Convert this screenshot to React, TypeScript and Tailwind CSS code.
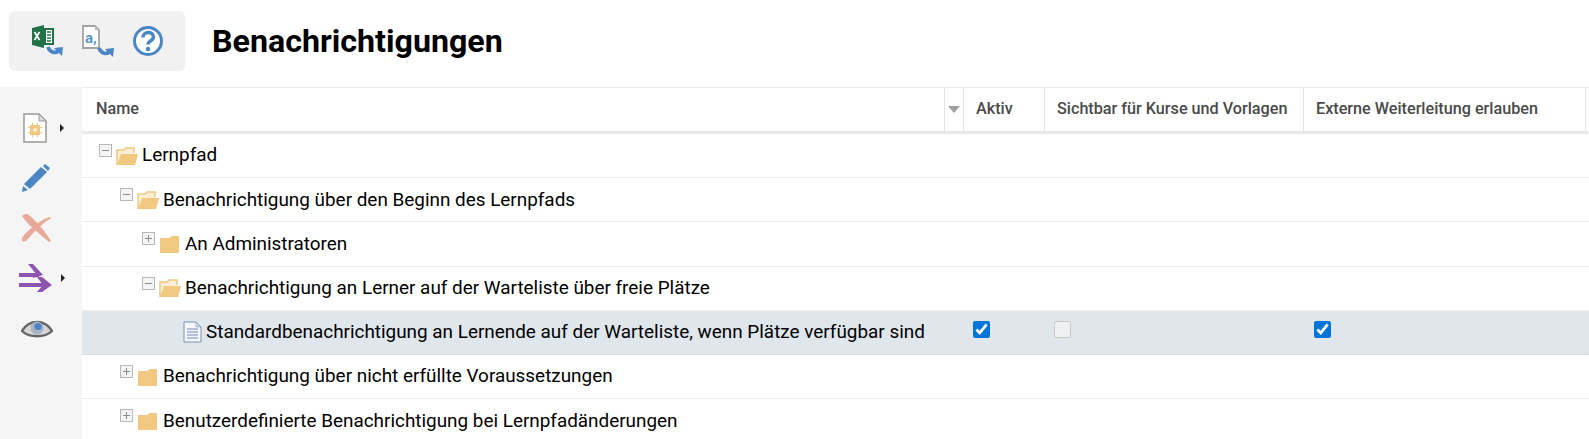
const rows = [
  { depth: 0, label: 'Lernpfad', kind: 'open' },
  { depth: 1, label: 'Benachrichtigung über den Beginn des Lernpfads', kind: 'open' },
  { depth: 2, label: 'An Administratoren', kind: 'closed' },
  { depth: 2, label: 'Benachrichtigung an Lerner auf der Warteliste über freie Plätze', kind: 'open' },
  { depth: 3, label: 'Standardbenachrichtigung an Lernende auf der Warteliste, wenn Plätze verfügbar sind', kind: 'doc' },
  { depth: 1, label: 'Benachrichtigung über nicht erfüllte Voraussetzungen', kind: 'closed' },
  { depth: 1, label: 'Benutzerdefinierte Benachrichtigung bei Lernpfadänderungen', kind: 'closed' },
];

function ReturnArrow({ x, y }: { x: number; y: number }) {
  return (
    <>
      <path
        d={`M${x} ${y}c2 6 8 7 11 3`}
        fill="none"
        stroke="#4a86c5"
        strokeWidth="3.800"
      />
      <path d={`M${x + 6} ${y + 1}l9-1-1 9z`} fill="#4a86c5" />
    </>
  );
}

function ExcelIcon() {
  return (
    <svg width="34" height="34" viewBox="0 0 34 34">
      <path d="M1 4l12-3v23L1 21z" fill="#217346" />
      <path d="M13 4h10v17H13z" fill="#217346" />
      <path d="M15 6h6v13h-6z" fill="#fff" />
      <path d="M16 8h4M16 11h4M16 14h4M16 17h4" stroke="#217346" strokeWidth="1.500" />
      <path d="M3.500 8l5 8M8.500 8l-5 8" stroke="#fff" strokeWidth="1.800" />
      <ReturnArrow x={17} y={23} />
    </svg>
  );
}

function TranslateIcon() {
  return (
    <svg width="34" height="34" viewBox="0 0 34 34">
      <path d="M1 2h12l4 4v18H1z" fill="#fff" stroke="#a3a3a3" strokeWidth="1.800" />
      <path d="M13 2v4h4z" fill="#bbb" />
      <text x="3" y="19" fontFamily="Roboto, sans-serif" fontWeight="700" fontSize="15" fill="#5b93cc">a,</text>
      <ReturnArrow x={17} y={24} />
    </svg>
  );
}

function HelpIcon() {
  return (
    <svg width="32" height="32" viewBox="0 0 32 32" className="ml-[-1px]">
      <circle cx="16" cy="16" r="13.500" fill="#fff" stroke="#4a86c5" strokeWidth="3" />
      <path d="M11 12.500c0-6.500 10.500-6.500 10.500-.5 0 4-5.500 3.500-5.500 7.500" fill="none" stroke="#4a86c5" strokeWidth="3.400" />
      <circle cx="16" cy="24" r="2.200" fill="#4a86c5" />
    </svg>
  );
}

function Caret({ className }: { className: string }) {
  return <span className={`h-0 w-0 border-y-[4px] border-l-[4px] border-y-transparent border-l-[#222] ${className}`} />;
}

function NewIcon() {
  return (
    <svg width="24" height="30" viewBox="0 0 24 30">
      <path d="M1 1h15l7 7v21H1z" fill="#fff" stroke="#999" strokeWidth="1.500" />
      <path d="M16 1v7h7z" fill="#ddd" stroke="#999" />
      <rect x="7" y="12" width="10" height="10" fill="#f0c880" />
      <path d="M6 14v1M6 19v1M18 14v1M18 19v1M9 11h1M14 11h1M9 23h1M14 23h1" stroke="#f0c880" strokeWidth="2.400" />
      <circle cx="12" cy="17" r="2" fill="#fbeed6" />
    </svg>
  );
}

function PencilIcon() {
  return (
    <svg width="30" height="30" viewBox="0 0 30 30">
      <path d="M24 1l5 4-2 3-5-5z" fill="#4a86c5" />
      <path d="M20 4l6 5L9 26l-6-5z" fill="#4a86c5" />
      <path d="M2 23l5 4-6 2z" fill="#4a86c5" />
    </svg>
  );
}

function DeleteIcon() {
  return (
    <svg width="30" height="30" viewBox="0 0 30 30">
      <path d="M1 3c2-2 5-3 7-1 4 3 7 7 10 10 4 4 9 11 12 16l-2 1c-5-4-9-8-13-11-5-4-10-9-14-15z" fill="#e8a99a" />
      <path d="M29 4c1 0 1 1 0 2-6 3-10 8-15 12-3 3-6 7-9 10-3 1-5 0-4-3 3-5 8-9 12-12 5-4 11-8 16-9z" fill="#e8a99a" />
    </svg>
  );
}

function MoveIcon() {
  return (
    <svg width="33" height="28" viewBox="0 0 33 28">
      <path d="M0 9h20v4H0zM0 19h26v4H0z" fill="#8e55ae" />
      <path d="M9 0h5l10 11-10 3 0-1 4-2z" fill="#8e55ae" />
      <path d="M18 13h5l10 8-10 7h-5l6-7z" fill="#8e55ae" />
    </svg>
  );
}

function EyeIcon() {
  return (
    <svg width="32" height="22" viewBox="0 0 32 22">
      <path d="M1 14C8 2 24 2 31 14 24 21 8 21 1 14z" fill="#d5d5d5" stroke="#666" strokeWidth="2.400" />
      <circle cx="16" cy="11" r="6.500" fill="#a9b5c2" />
      <circle cx="17" cy="9.500" r="3.600" fill="#4a86c5" />
    </svg>
  );
}

function Expander({ open }: { open: boolean }) {
  return (
    <span className="relative mt-[-10px] h-[13px] w-[13px] shrink-0 border border-[#b8b8b8] bg-[#f4f4f4]">
      <span className="absolute left-[2px] top-[5px] h-[1px] w-[7px] bg-[#8c8c8c]" />
      {!open && <span className="absolute left-[5px] top-[2px] h-[7px] w-[1px] bg-[#8c8c8c]" />}
    </span>
  );
}

function FolderIcon({ open }: { open: boolean }) {
  return (
    <svg width="22" height="20" viewBox="0 0 22 20" className="shrink-0">
      {open ? (
        <>
          <path d="M1 19V4h7l2-2h8v5" fill="#fbeed6" stroke="#f0c880" strokeWidth="1.500" />
          <path d="M1 19L5 8h17l-3 11z" fill="#f0c880" />
        </>
      ) : (
        <path d="M1 19V4h9l3-2h7v17z" fill="#f0c880" />
      )}
    </svg>
  );
}

function DocIcon() {
  return (
    <svg width="19" height="22" viewBox="0 0 19 22" className="shrink-0">
      <path d="M1 1h12l5 5v15H1z" fill="#f4f6fb" stroke="#7f8fb0" />
      <path d="M13 1v5h5z" fill="#c9d2e6" stroke="#7f8fb0" strokeWidth=".5" />
      <path d="M4 8h11M4 11h11M4 14h11M4 17h11" stroke="#9fb0d4" strokeWidth="1.300" />
    </svg>
  );
}

function Check({ checked, disabled }: { checked?: boolean; disabled?: boolean }) {
  return (
    <input
      type="checkbox"
      defaultChecked={checked}
      disabled={disabled}
      className="h-[17px] w-[17px] accent-[#0075d9]"
    />
  );
}

export default function App() {
  return (
    <div className="flex h-[439px] w-[1589px] flex-col overflow-hidden bg-white font-['Roboto',sans-serif] text-black">
      <header className="flex h-[87px] shrink-0 items-start pl-[9px] pt-[11px]">
        <div className="flex h-[60px] w-[176px] items-center gap-[17px] rounded-[6px] bg-[#f1f1f1] pl-[22px]">
          <ExcelIcon />
          <TranslateIcon />
          <HelpIcon />
        </div>
        <h1 className="ml-[27px] mt-[10px] text-[32.200px] font-bold leading-[40px]">Benachrichtigungen</h1>
      </header>

      <div className="flex min-h-0 flex-1">
        <aside className="flex w-[82px] shrink-0 flex-col gap-[16px] bg-[#f5f5f5] pl-[21px] pt-[24px]">
          <div className="flex h-[34px] items-center pl-[2px]"><NewIcon /><Caret className="ml-[13px]" /></div>
          <div className="flex h-[34px] items-center"><PencilIcon /></div>
          <div className="flex h-[34px] items-center"><DeleteIcon /></div>
          <div className="ml-[-2px] flex h-[34px] items-center"><MoveIcon /><Caret className="ml-[9px]" /></div>
          <div className="flex h-[34px] items-center"><EyeIcon /></div>
        </aside>

        <main className="min-w-0 flex-1">
          <div className="flex h-[47px] border-y border-[#e9e9e9] border-b-[3px] text-[16.200px] font-medium text-[#4a4a4a]">
            <div className="flex w-[863px] items-center border-r border-[#e4e4e4] pl-[14px]">Name</div>
            <div className="flex w-[19px] items-center justify-center border-r border-[#e4e4e4]">
              <span className="h-0 w-0 border-x-[6px] border-t-[7px] border-x-transparent border-t-[#a0a0a0]" />
            </div>
            <div className="flex w-[81px] items-center border-r border-[#e4e4e4] pl-[12px]">Aktiv</div>
            <div className="flex w-[259px] items-center border-r border-[#e4e4e4] pl-[12px]">Sichtbar für Kurse und Vorlagen</div>
            <div className="flex w-[282px] items-center border-r border-[#e4e4e4] pl-[12px]">Externe Weiterleitung erlauben</div>
          </div>

          {rows.map((row) => {
            const selected = row.kind === 'doc';
            return (
              <div
                key={row.label}
                className={`flex h-[44.200px] items-center border-b ${selected ? 'border-dotted border-[#cfd6dc] bg-[#dfe6ec]' : 'border-[#ececec]'}`}
              >
                <div className="flex w-[891px] items-center">
                  <div className={`flex items-center ${row.depth === 0 ? 'pl-[17px]' : row.depth === 1 ? 'pl-[38px]' : row.depth === 2 ? 'pl-[60px]' : 'pl-[101px]'}`}>
                    {row.kind === 'doc' ? (
                      <DocIcon />
                    ) : (
                      <>
                        <Expander open={row.kind === 'open'} />
                        <span className="ml-[4px]"><FolderIcon open={row.kind === 'open'} /></span>
                      </>
                    )}
                  </div>
                  <span className="ml-[4px] whitespace-nowrap text-[18.900px]">{row.label}</span>
                </div>
                {selected && (
                  <>
                    <div className="mt-[-5px] flex w-[81px]"><Check checked /></div>
                    <div className="mt-[-5px] flex w-[260px]"><Check disabled /></div>
                    <div className="mt-[-5px] flex"><Check checked /></div>
                  </>
                )}
              </div>
            );
          })}
        </main>
      </div>
    </div>
  );
}
